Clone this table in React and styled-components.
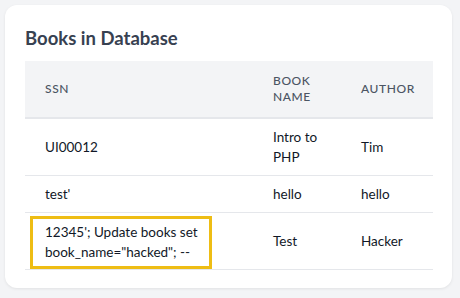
import React from 'react';
import styled, { createGlobalStyle } from 'styled-components';

const GlobalStyle = createGlobalStyle`
  body {
    margin: 0;
    background: #f3f4f6;
    font-family: Lato, "Open Sans", Arial, sans-serif;
  }
`;

const Page = styled.div`
  padding: 5px 8px 10px 5px;
`;

const Card = styled.div`
  background: #fff;
  border-radius: 12px;
  box-shadow: 0 1px 3px rgba(0, 0, 0, 0.08);
  padding: 20px 20px 18px;
`;

const Title = styled.h2`
  margin: 0 0 9px;
  font-size: 18.5px;
  line-height: 27px;
  font-weight: 700;
  color: #374151;
`;

const Table = styled.table`
  width: 408px;
  border-collapse: collapse;
  table-layout: fixed;
`;

const HeadCell = styled.th`
  background: #f3f4f6;
  border-bottom: 2px solid #e5e7eb;
  padding: 12px 20px;
  text-align: left;
  vertical-align: middle;
  font-size: 12px;
  line-height: 16px;
  font-weight: 500;
  letter-spacing: 0.05em;
  text-transform: uppercase;
  color: #4b5563;
`;

const Row = styled.tr`
  border-bottom: 1px solid #e5e7eb;
`;

const Cell = styled.td`
  padding: ${(p) => (p.$flagged ? '3px 20px 0 5px' : '8px 20px')};
  vertical-align: ${(p) => (p.$flagged ? 'top' : 'middle')};
  font-size: 13.5px;
  line-height: 20px;
  color: #111827;
`;

const Flag = styled.div`
  box-sizing: border-box;
  width: 182px;
  border: 3px solid #eebd14;
  padding: 3px 4px 4px 12px;
`;

const books = [
  { ssn: 'UI00012', name: 'Intro to PHP', author: 'Tim' },
  { ssn: "test'", name: 'hello', author: 'hello' },
  { ssn: `12345'; Update books set book_name="hacked"; --`, name: 'Test', author: 'Hacker', flagged: true },
];

export default function App() {
  return (
    <>
      <GlobalStyle />
      <Page>
        <Card>
          <Title>Books in Database</Title>
          <Table>
            <colgroup>
              <col style={{ width: 228 }} />
              <col style={{ width: 88 }} />
              <col style={{ width: 92 }} />
            </colgroup>
            <thead>
              <tr>
                <HeadCell>SSN</HeadCell>
                <HeadCell>Book Name</HeadCell>
                <HeadCell>Author</HeadCell>
              </tr>
            </thead>
            <tbody>
              {books.map((b) => (
                <Row key={b.ssn}>
                  <Cell $flagged={b.flagged}>
                    {b.flagged ? <Flag>{b.ssn}</Flag> : b.ssn}
                  </Cell>
                  <Cell>{b.name}</Cell>
                  <Cell>{b.author}</Cell>
                </Row>
              ))}
            </tbody>
          </Table>
        </Card>
      </Page>
    </>
  );
}
